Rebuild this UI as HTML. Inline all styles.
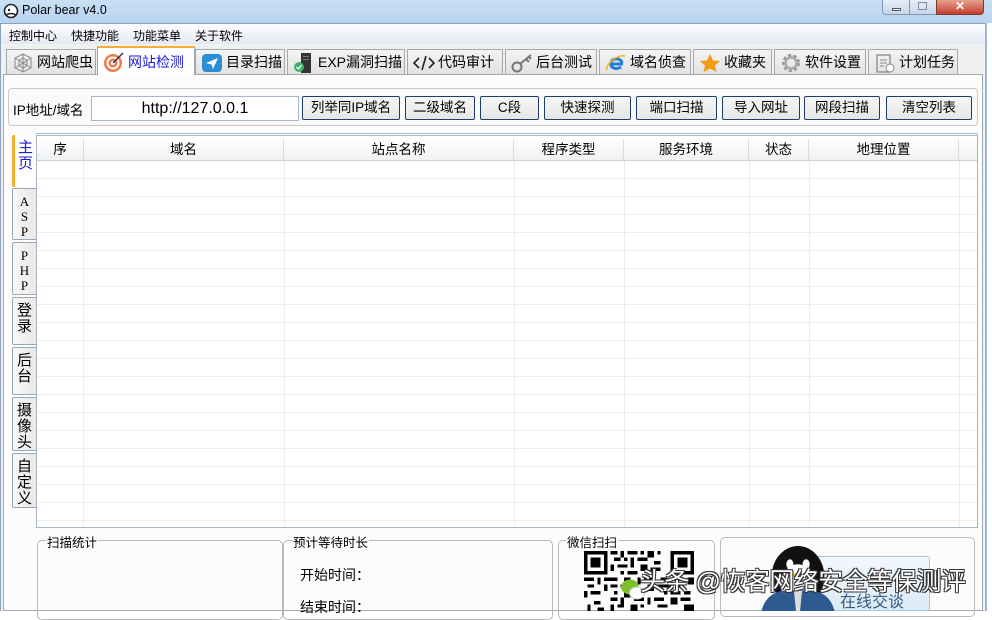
<!DOCTYPE html>
<html><head><meta charset="utf-8">
<style>
*{box-sizing:border-box;margin:0;padding:0}
body{width:992px;height:611px;overflow:hidden;background:#fff;font-family:"Liberation Sans","Noto Sans CJK SC",sans-serif;font-size:13px;color:#000;position:relative}
.abs{position:absolute}
#title{left:0;top:0;width:992px;height:23px;background:linear-gradient(#c9dff5,#b9d3ef);}
#title span{position:absolute;left:22px;top:3px;font-size:12.5px}
#win{left:0;top:23px;width:987px;height:588px;background:#f0f0f0;border-left:1px solid #8aa2bd;border-right:2px solid #9cb7d6}
#menu{left:1px;top:23px;width:984px;height:21px;background:linear-gradient(#fdfdfe,#e4e9f3);border-top:1px solid #8aa2bd}
#menu span{position:absolute;top:3px;font-size:12px}
.tab{position:absolute;top:49px;height:25px;background:linear-gradient(#f4f4f4,#e2e2e2);border:1px solid #a0a8b0;border-bottom:none;font-size:14px;padding-left:30px;line-height:24px;white-space:nowrap;overflow:hidden}
.tab svg{position:absolute;left:5px;top:3px}
.tab.sel{top:46px;height:29px;background:#fff;border-top:2px solid #f5b031;color:#1b1bd5;line-height:28px}
#panel{left:3px;top:74px;width:980px;height:537px;background:#fcfcfd;border:1px solid #a0a8b0}
#ipbox{left:8px;top:88px;width:970px;height:38px;border:1px solid #c8c8c8;border-radius:4px;background:#fafafa}
.btn{position:absolute;top:96px;height:24px;border:1px solid #1e3e66;border-radius:2px;background:linear-gradient(#f6f6f6,#e6e6e6);font-size:13.5px;text-align:center;line-height:22px}
#grid{left:36px;top:133px;width:942px;height:395px;border:1px solid #a6b4c4;border-top:3px double #a6b4c4;background:#fff;overflow:hidden}
.hd{position:absolute;top:3px;height:22px;background:linear-gradient(#fff,#f0f1f3);border-right:1px solid #dcdcdc;border-bottom:1px solid #d0d0d0;text-align:center;font-size:13.5px;line-height:22px}
.vl{position:absolute;top:25px;width:1px;height:380px;background:#ececec}
.vt{position:absolute;left:12px;width:24px;background:linear-gradient(90deg,#f8f8f8,#e8e8e8);border:1px solid #9aa8b4;border-right:none;border-radius:2px 0 0 2px;text-align:center;font-size:15px;line-height:16px;padding-top:5px}
.gb{position:absolute;top:540px;height:80px;border:1px solid #b8b8b8;border-radius:5px}
.gl{position:absolute;top:532px;font-size:12.5px;background:#fcfcfd;padding:0 1px}
</style></head><body>
<div id="title" class="abs">
<svg class="abs" style="left:3px;top:3px" width="16" height="16" viewBox="0 0 16 16"><circle cx="8" cy="8" r="6.5" fill="#fff" stroke="#222" stroke-width="1.6"/><circle cx="6" cy="7" r="1.2" fill="#222"/><path d="M3 12 Q8 9 13 12" stroke="#222" fill="none" stroke-width="1.4"/></svg>
<span>Polar bear v4.0</span>
<div class="abs" style="left:882px;top:0;width:28px;height:15px;border:1px solid #7f95b0;border-top:none;border-radius:0 0 0 4px;background:linear-gradient(#e6eef8,#c8d6e8)"><div class="abs" style="left:9px;top:8px;width:9px;height:3px;background:#fff;border:1px solid #556"></div></div>
<div class="abs" style="left:910px;top:0;width:26px;height:15px;border-bottom:1px solid #7f95b0;background:linear-gradient(#e6eef8,#c8d6e8)"><div class="abs" style="left:8px;top:2px;width:9px;height:8px;border:1px solid #889"></div></div>
<div class="abs" style="left:936px;top:0;width:48px;height:15px;border:1px solid #7a3a30;border-top:none;border-radius:0 0 4px 0;background:linear-gradient(#e8a090,#c0402c);color:#fff;font-weight:bold;text-align:center;font-size:12px;line-height:13px">✕</div>
</div>
<div id="win" class="abs"></div>
<div id="menu" class="abs"><span style="left:8px">控制中心</span><span style="left:70px">快捷功能</span><span style="left:132px">功能菜单</span><span style="left:194px">关于软件</span></div>

<div id="panel" class="abs"></div>

<div class="tab" style="left:6px;width:90px"><svg width="22" height="20" viewBox="0 0 22 20"><g stroke="#888" fill="none" stroke-width="1"><polygon points="11,1 19,5 19,15 11,19 3,15 3,5"/><polygon points="11,5 15,7.5 15,12.5 11,15 7,12.5 7,7.5"/><path d="M11 1V19M3 5L19 15M19 5L3 15"/></g></svg>网站爬虫</div>
<div class="tab" style="left:195px;width:90px"><svg width="22" height="20" viewBox="0 0 22 20"><rect x="1" y="1" width="20" height="18" rx="4" fill="#2c8fd4"/><path d="M5 10L17 5L12 16L10.5 11.5Z" fill="#fff"/></svg>目录扫描</div>
<div class="tab" style="left:287px;width:118px"><svg width="22" height="20" viewBox="0 0 22 20"><rect x="8" y="0" width="10" height="20" fill="#333"/><rect x="10" y="3" width="6" height="1" fill="#777"/><rect x="10" y="6" width="6" height="1" fill="#777"/><circle cx="6" cy="14" r="5" fill="#3bb36a"/><path d="M3.5 14l2 2 3-4" stroke="#fff" fill="none" stroke-width="1.3"/></svg>EXP漏洞扫描</div>
<div class="tab" style="left:407px;width:96px"><svg width="22" height="20" viewBox="0 0 22 20"><path d="M6 5L1 10L6 15M16 5L21 10L16 15M13 3L9 17" stroke="#222" fill="none" stroke-width="1.6"/></svg>代码审计</div>
<div class="tab" style="left:505px;width:92px"><svg width="24" height="20" viewBox="0 0 24 20"><circle cx="6" cy="14" r="4.5" stroke="#777" fill="none" stroke-width="2"/><path d="M9 11L20 2M15 6l3 3M18 4l2 2" stroke="#777" stroke-width="2"/></svg>后台测试</div>
<div class="tab" style="left:599px;width:92px"><svg width="22" height="20" viewBox="0 0 22 20"><path d="M18 11H6c0 4 5 6 10 3" stroke="#1f7fd6" fill="none" stroke-width="3"/><path d="M6 10c0-5 10-6 11 0" stroke="#1f7fd6" fill="none" stroke-width="3"/><path d="M2 17C0 12 12 1 20 3" stroke="#f3b51b" fill="none" stroke-width="1.5"/></svg>域名侦查</div>
<div class="tab" style="left:693px;width:79px"><svg width="22" height="20" viewBox="0 0 22 20"><polygon points="11,1 14,7.5 21,8 16,12.5 17.5,19 11,15.5 4.5,19 6,12.5 1,8 8,7.5" fill="#f39c12"/></svg>收藏夹</div>
<div class="tab" style="left:774px;width:92px"><svg width="22" height="20" viewBox="0 0 22 20"><circle cx="11" cy="10" r="7" fill="none" stroke="#999" stroke-width="4" stroke-dasharray="3 2"/><circle cx="11" cy="10" r="5.5" fill="none" stroke="#aaa" stroke-width="2.5"/></svg>软件设置</div>
<div class="tab" style="left:868px;width:90px"><svg width="22" height="20" viewBox="0 0 22 20"><rect x="3" y="2" width="13" height="17" fill="none" stroke="#888" stroke-width="1.3"/><path d="M6 7h7M6 10h7M6 13h4" stroke="#888"/><circle cx="16" cy="15" r="4" fill="#fff" stroke="#888"/></svg>计划任务</div>
<div class="tab sel" style="left:97px;width:98px"><svg width="22" height="22" viewBox="0 0 22 22"><circle cx="10" cy="12" r="9" fill="#f07a4a"/><circle cx="10" cy="12" r="6.5" fill="#fff"/><circle cx="10" cy="12" r="4.5" fill="#f07a4a"/><circle cx="10" cy="12" r="2" fill="#fff"/><path d="M10 12L20 2" stroke="#334" stroke-width="1.5"/></svg>网站检测</div>

<div id="ipbox" class="abs"></div>
<div class="abs" style="left:13px;top:99px;font-size:13.5px">IP地址/域名</div>
<div class="abs" style="left:91px;top:96px;width:208px;height:25px;border:1px solid #a8b8cc;background:#fff;font-size:16px;text-align:center;line-height:23px">http://127.0.0.1</div>
<div class="btn" style="left:302px;width:98px">列举同IP域名</div>
<div class="btn" style="left:405px;width:70px">二级域名</div>
<div class="btn" style="left:480px;width:59px">C段</div>
<div class="btn" style="left:544px;width:87px">快速探测</div>
<div class="btn" style="left:636px;width:81px">端口扫描</div>
<div class="btn" style="left:722px;width:78px">导入网址</div>
<div class="btn" style="left:804px;width:76px">网段扫描</div>
<div class="btn" style="left:886px;width:86px">清空列表</div>

<div id="grid" class="abs">
<div style="position:absolute;left:0;top:25px;width:942px;height:380px;background:repeating-linear-gradient(#fff 0 17px,#ececec 17px 18px)"></div>
<div class="hd" style="left:0;width:47px">序</div>
<div class="hd" style="left:47px;width:200px">域名</div>
<div class="hd" style="left:247px;width:230px">站点名称</div>
<div class="hd" style="left:477px;width:110px">程序类型</div>
<div class="hd" style="left:587px;width:125px">服务环境</div>
<div class="hd" style="left:712px;width:60px">状态</div>
<div class="hd" style="left:772px;width:150px">地理位置</div>
<div class="hd" style="left:922px;width:20px;border-right:none"></div>
<div class="vl" style="left:46px"></div><div class="vl" style="left:247px"></div><div class="vl" style="left:477px"></div><div class="vl" style="left:587px"></div><div class="vl" style="left:712px"></div><div class="vl" style="left:772px"></div><div class="vl" style="left:922px"></div>
</div>

<div class="vt" style="top:135px;height:52px;background:#fff;border-left:3px solid #f5b031;color:#1b1bd5;border-top:none;border-bottom:none">主<br>页</div>
<div class="vt" style="top:188px;height:52px;font-family:'Liberation Serif',serif;font-size:13px;line-height:15px">A<br>S<br>P</div>
<div class="vt" style="top:242px;height:53px;font-family:'Liberation Serif',serif;font-size:13px;line-height:15px">P<br>H<br>P</div>
<div class="vt" style="top:297px;height:48px">登<br>录</div>
<div class="vt" style="top:347px;height:48px">后<br>台</div>
<div class="vt" style="top:397px;height:54px">摄<br>像<br>头</div>
<div class="vt" style="top:453px;height:55px">自<br>定<br>义</div>

<div class="gb" style="left:37px;width:246px"></div>
<div class="gb" style="left:283px;width:270px"></div>
<div class="gb" style="left:558px;width:157px"></div>
<div class="gb" style="left:720px;width:255px;top:537px"></div>
<div class="gl" style="left:46px">扫描统计</div>
<div class="gl" style="left:292px">预计等待时长</div>
<div class="gl" style="left:566px">微信扫扫</div>
<div class="abs" style="left:300px;top:565px;font-size:14px">开始时间：</div>
<div class="abs" style="left:300px;top:597px;font-size:14px">结束时间：</div>

<svg class="abs" style="left:584px;top:551px" width="110" height="60" viewBox="0 0 33 18" shape-rendering="crispEdges">
<g fill="#000">
<path d="M8 0h2v1h-2zM11 0h1v2h-1zM13 0h3v1h-3zM17 0h1v1h-1zM19 0h2v2h-2zM22 0h1v1h-1zM9 2h2v1h-2zM12 2h1v1h-1zM14 2h1v3h-1zM16 2h3v1h-3zM21 3h2v1h-2zM8 4h1v2h-1zM10 4h3v1h-3zM17 4h2v2h-2zM20 5h3v1h-3zM11 6h1v1h-1zM13 6h3v1h-3zM0 8h3v1h-3zM4 8h1v2h-1zM6 8h4v1h-4zM12 8h2v1h-2zM16 8h1v2h-1zM18 8h3v1h-3zM23 8h2v1h-2zM27 8h3v1h-3zM31 8h2v2h-2zM1 10h2v1h-2zM6 10h1v2h-1zM8 10h2v1h-2zM11 10h3v1h-3zM15 10h1v1h-1zM19 10h2v2h-2zM22 10h4v1h-4zM28 10h1v1h-1zM0 12h1v2h-1zM2 12h3v1h-3zM9 12h1v1h-1zM12 12h2v2h-2zM16 12h2v1h-2zM24 12h1v1h-1zM26 12h3v1h-3zM30 12h2v1h-2zM8 14h2v1h-2zM11 14h1v2h-1zM15 14h3v1h-3zM19 14h1v2h-1zM21 14h3v1h-3zM26 14h2v2h-2zM29 14h3v1h-3zM8 16h1v2h-1zM10 16h2v1h-2zM14 16h2v2h-2zM17 16h1v1h-1zM22 16h3v1h-3zM30 16h3v2h-3zM3 15h2v1h-2zM1 16h1v2h-1zM4 17h2v1h-2z"/>
<rect x="0" y="0" width="7" height="7"/><rect x="26" y="0" width="7" height="7"/>
</g>
<g fill="#fff"><rect x="1" y="1" width="5" height="5"/><rect x="27" y="1" width="5" height="5"/></g>
<g fill="#000"><rect x="2" y="2" width="3" height="3"/><rect x="28" y="2" width="3" height="3"/></g>
</svg>
<svg class="abs" style="left:620px;top:578px" width="26" height="22" viewBox="0 0 26 22"><ellipse cx="10" cy="9" rx="9" ry="7.5" fill="#7cc12a"/><ellipse cx="17" cy="15" rx="7.5" ry="6" fill="#fff" stroke="#ccc"/></svg>

<div class="abs" style="left:790px;top:556px;width:140px;height:55px;border:1px solid #a8c4dc;border-radius:3px;background:linear-gradient(#f2f8fd,#dcebf7)"></div>
<div class="abs" style="left:840px;top:588px;font-size:16px;color:#345a80">在线交谈</div>
<svg class="abs" style="left:755px;top:544px" width="86" height="67" viewBox="0 0 80 66"><ellipse cx="40" cy="32" rx="26" ry="30" fill="#111"/><ellipse cx="40" cy="40" rx="17" ry="20" fill="#fff"/><path d="M4 66Q10 42 40 46Q70 42 76 66Z" fill="#2e5a92"/><path d="M36 46h8l-2 20h-4z" fill="#ddd"/><ellipse cx="32" cy="20" rx="3.5" ry="5" fill="#fff"/><ellipse cx="48" cy="20" rx="3.5" ry="5" fill="#fff"/><path d="M33 29h14l-7 6z" fill="#f5b800"/></svg>

<div class="abs" style="left:640px;top:562px;font-size:25px;color:#fff;white-space:nowrap;text-shadow:-1px -1px 0 #333,1px -1px 0 #333,-1px 1px 0 #333,1px 1px 0 #333;letter-spacing:-0.5px">头条 @恢客网络安全等保测评</div>
</body></html>
